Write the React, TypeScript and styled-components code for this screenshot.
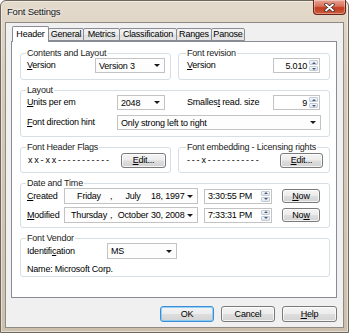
import styled, { createGlobalStyle } from "styled-components";

const GlobalStyle = createGlobalStyle`
  html, body {
    margin: 0;
    padding: 0;
    background: #ffffff;
    overflow: hidden;
  }
  body {
    font-family: "Liberation Sans", Arial, sans-serif;
    font-size: 9px;
    letter-spacing: -0.2px;
    color: #000;
  }
  * { box-sizing: border-box; }
`;

const Window = styled.div`
  width: 349px;
  height: 333px;
  display: flex;
  flex-direction: column;
  padding: 0 4px 4px 4px;
  border: 1px solid #6f675c;
  border-radius: 6px 6px 0 0;
  background: linear-gradient(180deg, #e4dacb 0%, #d6cbb9 25%, #cdc1ad 100%);
  box-shadow: inset 0 0 0 1px rgba(255, 255, 255, 0.45);
`;

const TitleBar = styled.div`
  height: 21px;
  display: flex;
  align-items: flex-start;
  justify-content: space-between;
`;

const Title = styled.div`
  padding: 5px 0 0 2px;
  line-height: 11px;
  font-size: 9.5px;
  color: #111;
  text-shadow: 0 0 5px rgba(255, 255, 255, 0.95), 0 0 2px rgba(255, 255, 255, 0.9);
`;

const CloseButton = styled.div`
  width: 33px;
  height: 15px;
  margin: -1px -2px 0 0;
  border: 1px solid #6a2418;
  border-top: none;
  border-radius: 0 0 4px 4px;
  background: linear-gradient(180deg, #e7a493 0%, #d9705a 45%, #c23d21 55%, #cf5a3a 100%);
  box-shadow: inset 0 0 0 1px rgba(255, 255, 255, 0.35);
  display: flex;
  align-items: center;
  justify-content: center;
`;

const Client = styled.div`
  flex: 1;
  display: flex;
  flex-direction: column;
  background: #f0f0f0;
  border: 1px solid #8f8a83;
  padding: 3px 6px 5px 5px;
`;

const TabStrip = styled.div`
  height: 16px;
  margin-bottom: -1px;
  padding-left: 1px;
  display: flex;
  align-items: flex-start;
  position: relative;
  z-index: 2;
`;

const Tab = styled.div<{ $w: number; $active?: boolean }>`
  width: ${(p) => p.$w}px;
  height: ${(p) => (p.$active ? 16 : 13)}px;
  margin-top: ${(p) => (p.$active ? 0 : 2)}px;
  margin-right: -1px;
  border: 1px solid #898c95;
  border-bottom: ${(p) => (p.$active ? "none" : "1px solid #898c95")};
  border-radius: 2px 2px 0 0;
  background: ${(p) =>
    p.$active ? "#ffffff" : "linear-gradient(180deg, #f3f3f3 0%, #ebebeb 50%, #dedede 51%, #e6e6e6 100%)"};
  position: relative;
  z-index: ${(p) => (p.$active ? 2 : 1)};
  display: flex;
  align-items: ${(p) => (p.$active ? "flex-start" : "center")};
  justify-content: center;
  padding-top: ${(p) => (p.$active ? 2 : 0)}px;
  line-height: 11px;
`;

const Panel = styled.div`
  flex: 1;
  background: #ffffff;
  border: 1px solid #898c95;
  padding: 6px 6px 0 8px;
  display: flex;
  flex-direction: column;
  gap: 5px;
`;

const HalfRow = styled.div`
  display: grid;
  grid-template-columns: 151px 152px;
  column-gap: 7px;
`;

const Group = styled.fieldset<{ $pl?: number; $pr?: number; $pb?: number; $pt?: number }>`
  margin: 0;
  min-width: 0;
  border: 1px solid #d5dfe5;
  border-radius: 3px;
  padding: ${(p) => p.$pt ?? 0}px ${(p) => p.$pr ?? 6}px ${(p) => p.$pb ?? 6}px
    ${(p) => p.$pl ?? 6}px;
`;

const Legend = styled.legend`
  padding: 0 1px;
  margin-left: -1px;
  line-height: 10px;
  color: #1b1b1b;
`;

const Rows = styled.div<{ $gap?: number }>`
  display: flex;
  flex-direction: column;
  gap: ${(p) => p.$gap ?? 5}px;
`;

const Row = styled.div`
  display: flex;
  align-items: center;
`;

const Label = styled.div<{ $w?: number; $ml?: number }>`
  width: ${(p) => (p.$w ? `${p.$w}px` : "auto")};
  margin-left: ${(p) => p.$ml ?? 0}px;
  flex-shrink: 0;
  white-space: nowrap;
  line-height: 11px;
`;

const Flags = styled(Label)`
  letter-spacing: 1.8px;
`;

const Key = styled.span`
  text-decoration: underline;
`;

const Combo = styled.div<{ $w: number; $h?: number }>`
  width: ${(p) => p.$w}px;
  height: ${(p) => p.$h ?? 15}px;
  flex-shrink: 0;
  border: 1px solid #c3c3c3;
  background: #fdfdfd;
  display: flex;
  align-items: center;
  justify-content: space-between;
  padding: 0 4px 0 3px;
  white-space: nowrap;
`;

const Arrow = styled.span`
  width: 0;
  height: 0;
  border-left: 3px solid transparent;
  border-right: 3px solid transparent;
  border-top: 3px solid #1a1a1a;
  flex-shrink: 0;
`;

const DatePart = styled.span<{ $w: number; $center?: boolean }>`
  width: ${(p) => p.$w}px;
  text-align: ${(p) => (p.$center ? "center" : "left")};
  flex-shrink: 0;
`;

const DateFill = styled.span`
  flex: 1;
`;

const Spin = styled.div<{ $w: number; $ml?: number }>`
  width: ${(p) => p.$w}px;
  height: 15px;
  margin-left: ${(p) => p.$ml ?? 0}px;
  flex-shrink: 0;
  border: 1px solid #c3c3c3;
  background: #ffffff;
  display: flex;
  align-items: stretch;
`;

const SpinValue = styled.div<{ $left?: boolean }>`
  flex: 1;
  display: flex;
  align-items: center;
  justify-content: ${(p) => (p.$left ? "flex-start" : "flex-end")};
  padding: ${(p) => (p.$left ? "0 0 0 3px" : "0 2px 0 0")};
`;

const SpinButtons = styled.div`
  width: 10px;
  padding: 1px 1px 1px 0;
  display: flex;
  flex-direction: column;
  gap: 1px;
`;

const SpinHalf = styled.div<{ $down?: boolean }>`
  flex: 1;
  border: 1px solid #c2ccd8;
  border-radius: 1px;
  background: linear-gradient(180deg, #f5f7fa 0%, #dfe6ee 100%);
  display: flex;
  align-items: center;
  justify-content: center;

  &::after {
    content: "";
    width: 0;
    height: 0;
    border-left: 2px solid transparent;
    border-right: 2px solid transparent;
    ${(p) => (p.$down ? "border-top: 2px solid #4f5d73;" : "border-bottom: 2px solid #4f5d73;")}
  }
`;

const Button = styled.div<{ $w: number; $h?: number; $ml?: number; $default?: boolean }>`
  width: ${(p) => p.$w}px;
  height: ${(p) => p.$h ?? 15}px;
  margin-left: ${(p) => p.$ml ?? 0}px;
  flex-shrink: 0;
  border: 1px solid ${(p) => (p.$default ? "#3c8fd6" : "#7a7a7a")};
  border-radius: 3px;
  background: linear-gradient(180deg, #f4f4f4 0%, #ececec 48%, #dedede 52%, #d2d2d2 100%);
  box-shadow: inset 0 0 0 1px ${(p) => (p.$default ? "rgba(120, 200, 245, 0.8)" : "rgba(255, 255, 255, 0.75)")};
  display: flex;
  align-items: center;
  justify-content: center;
  line-height: 11px;
`;

const ButtonBar = styled.div`
  height: 16px;
  margin-top: 8px;
  display: flex;
  justify-content: flex-end;
  gap: 7px;
`;

const tabs = [
  { name: "Header", w: 37, active: true },
  { name: "General", w: 36 },
  { name: "Metrics", w: 37 },
  { name: "Classification", w: 58 },
  { name: "Ranges", w: 36 },
  { name: "Panose", w: 34 },
];

const SpinBox = ({ w, value, left, ml }: { w: number; value: string; left?: boolean; ml?: number }) => (
  <Spin $w={w} $ml={ml}>
    <SpinValue $left={left}>{value}</SpinValue>
    <SpinButtons>
      <SpinHalf />
      <SpinHalf $down />
    </SpinButtons>
  </Spin>
);

const App = () => {
  return (
    <>
      <GlobalStyle />
      <Window>
        <TitleBar>
          <Title>Font Settings</Title>
          <CloseButton>
            <svg width="11" height="9" viewBox="0 0 11 9">
              <path d="M2 1.5 L9 7.5 M9 1.5 L2 7.5" stroke="#3b2a28" strokeWidth="3.4" strokeLinecap="round" />
              <path d="M2 1.5 L9 7.5 M9 1.5 L2 7.5" stroke="#ffffff" strokeWidth="1.8" strokeLinecap="round" />
            </svg>
          </CloseButton>
        </TitleBar>
        <Client>
          <TabStrip>
            {tabs.map((t) => (
              <Tab key={t.name} $w={t.w} $active={t.active}>
                {t.name}
              </Tab>
            ))}
          </TabStrip>
          <Panel>
            <HalfRow>
              <Group $pr={4}>
                <Legend>Contents and Layout</Legend>
                <Row>
                  <Label $w={68}>
                    <Key>V</Key>ersion
                  </Label>
                  <Combo $w={70}>
                    Version 3
                    <Arrow />
                  </Combo>
                </Row>
              </Group>
              <Group $pl={8} $pr={8}>
                <Legend>Font revision</Legend>
                <Row>
                  <Label $w={86}>
                    <Key>V</Key>ersion
                  </Label>
                  <SpinBox w={47} value="5.010" />
                </Row>
              </Group>
            </HalfRow>

            <Group $pr={8}>
              <Legend>Layout</Legend>
              <Rows>
                <Row>
                  <Label $w={90}>
                    <Key>U</Key>nits per em
                  </Label>
                  <Combo $w={48}>
                    2048
                    <Arrow />
                  </Combo>
                  <Label $w={86} $ml={22}>
                    Smalles<Key>t</Key> read. size
                  </Label>
                  <SpinBox w={47} value="9" />
                </Row>
                <Row>
                  <Label $w={90}>
                    <Key>F</Key>ont direction hint
                  </Label>
                  <Combo $w={204}>
                    Only strong left to right
                    <Arrow />
                  </Combo>
                </Row>
              </Rows>
            </Group>

            <HalfRow>
              <Group $pt={1} $pb={4} $pr={4}>
                <Legend>Font Header Flags</Legend>
                <Row>
                  <Flags $w={93} $ml={1}>xx-xx-----------</Flags>
                  <Button $w={45}>
                    <Key>E</Key>dit...
                  </Button>
                </Row>
              </Group>
              <Group $pt={1} $pb={4} $pl={8}>
                <Legend>Font embedding - Licensing rights</Legend>
                <Row>
                  <Flags $w={93}>---x-----------</Flags>
                  <Button $w={43}>
                    <Key>E</Key>dit...
                  </Button>
                </Row>
              </Group>
            </HalfRow>

            <Group $pb={4}>
              <Legend>Date and Time</Legend>
              <Rows $gap={3}>
                <Row>
                  <Label $w={37}>
                    <Key>C</Key>reated
                  </Label>
                  <Combo $w={134} $h={16}>
                    <DatePart $w={42} $center>Friday</DatePart>
                    <DatePart $w={5}>,</DatePart>
                    <DatePart $w={36} $center>July</DatePart>
                    <DateFill>18, 1997</DateFill>
                    <Arrow />
                  </Combo>
                  <SpinBox w={68} value="3:30:55 PM" left ml={6} />
                  <Button $w={38} $h={14} $ml={10}>
                    <Key>N</Key>ow
                  </Button>
                </Row>
                <Row>
                  <Label $w={37}>
                    <Key>M</Key>odified
                  </Label>
                  <Combo $w={134} $h={16}>
                    <DatePart $w={42} $center>Thursday</DatePart>
                    <DatePart $w={5}>,</DatePart>
                    <DatePart $w={36} $center>October</DatePart>
                    <DateFill>30, 2008</DateFill>
                    <Arrow />
                  </Combo>
                  <SpinBox w={68} value="7:33:31 PM" left ml={6} />
                  <Button $w={38} $h={14} $ml={10}>
                    No<Key>w</Key>
                  </Button>
                </Row>
              </Rows>
            </Group>

            <Group $pb={1}>
              <Legend>Font Vendor</Legend>
              <Rows $gap={5}>
                <Row>
                  <Label $w={80}>
                    Identifi<Key>c</Key>ation
                  </Label>
                  <Combo $w={70} $h={16}>
                    MS
                    <Arrow />
                  </Combo>
                </Row>
                <Row>
                  <Label>Name: Microsoft Corp.</Label>
                </Row>
              </Rows>
            </Group>
          </Panel>
          <ButtonBar>
            <Button $w={54} $h={16} $default>
              OK
            </Button>
            <Button $w={54} $h={16}>
              Cancel
            </Button>
            <Button $w={55} $h={16}>
              <Key>H</Key>elp
            </Button>
          </ButtonBar>
        </Client>
      </Window>
    </>
  );
};

export default App;
